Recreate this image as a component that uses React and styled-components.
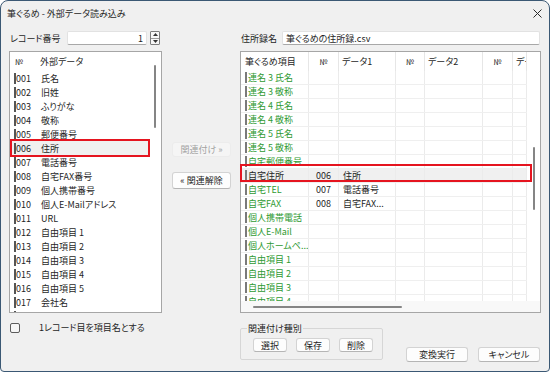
import React from "react";
import styled, { createGlobalStyle } from "styled-components";

const GlobalStyle = createGlobalStyle`
  * { box-sizing: border-box; }
  html, body { margin: 0; padding: 0; background: #ffffff; }
  body {
    font-family: "Noto Sans CJK JP", "Noto Sans", sans-serif;
    font-size: 9px;
    color: #1f1f1f;
    font-feature-settings: "palt";
  }
`;

const leftRows = [
  ["001", "氏名"], ["002", "旧姓"], ["003", "ふりがな"], ["004", "敬称"],
  ["005", "郵便番号"], ["006", "住所"], ["007", "電話番号"], ["008", "自宅FAX番号"],
  ["009", "個人携帯番号"], ["010", "個人E-Mailアドレス"], ["011", "URL"],
  ["012", "自由項目 1"], ["013", "自由項目 2"], ["014", "自由項目 3"],
  ["015", "自由項目 4"], ["016", "自由項目 5"], ["017", "会社名"], ["018", "会社名称2"],
];

const rightRows = [
  { name: "連名 3 氏名" }, { name: "連名 3 敬称" }, { name: "連名 4 氏名" },
  { name: "連名 4 敬称" }, { name: "連名 5 氏名" }, { name: "連名 5 敬称" },
  { name: "自宅郵便番号" },
  { name: "自宅住所", no: "006", data: "住所", selected: true },
  { name: "自宅TEL", no: "007", data: "電話番号" },
  { name: "自宅FAX", no: "008", data: "自宅FAX..." },
  { name: "個人携帯電話" }, { name: "個人E-Mail" }, { name: "個人ホームペ..." },
  { name: "自由項目 1" }, { name: "自由項目 2" }, { name: "自由項目 3" }, { name: "自由項目 4" },
];

const rightHead = ["筆ぐるめ項目", "№", "データ1", "№", "データ2", "№", "データ3"];

function App() {
  return (
    <>
      <GlobalStyle />
      <Window>
        <TitleBar>
          <span>筆ぐるめ - 外部データ読み込み</span>
          <svg width="9" height="9" viewBox="0 0 9 9">
            <path d="M0.5 0.5 L8.5 8.5 M8.5 0.5 L0.5 8.5" stroke="#2a2a2a" strokeWidth="1" />
          </svg>
        </TitleBar>
        <Content>
          <FieldRow>
            <FieldLabel $w={58}>レコード番号</FieldLabel>
            <TextBox $w={80} $align="right">1</TextBox>
            <Spinner>
              <SpinHalf>
                <svg width="5" height="3" viewBox="0 0 5 3"><path d="M0 3 L2.5 0 L5 3 Z" fill="#333" /></svg>
              </SpinHalf>
              <SpinHalf $bottom>
                <svg width="5" height="3" viewBox="0 0 5 3"><path d="M0 0 L2.5 3 L5 0 Z" fill="#333" /></svg>
              </SpinHalf>
            </Spinner>
          </FieldRow>
          <div />
          <FieldRow>
            <FieldLabel $w={42}>住所録名</FieldLabel>
            <TextBox $w={258}>筆ぐるめの住所録.csv</TextBox>
          </FieldRow>

          <ListBox $track={12}>
            <Rows>
              <LeftHead>
                <HeadNo>№</HeadNo>
                <span>外部データ</span>
              </LeftHead>
              {leftRows.map(([no, name]) => (
                <LeftRow key={no} $selected={no === "006"}>
                  <Bar $color="#555" />
                  <LeftNum>{no}</LeftNum>
                  <span>{name}</span>
                </LeftRow>
              ))}
            </Rows>
            <VTrack>
              <VThumb $top={13} $h={63} />
            </VTrack>
          </ListBox>

          <MiddleColumn>
            <PushButton disabled $h={15}>関連付け »</PushButton>
            <PushButton $h={17}>« 関連解除</PushButton>
          </MiddleColumn>

          <ListBox $track={13} $hbar>
            <Rows>
              <GridHead>
                {rightHead.map((h, i) => (
                  <HeadCell key={i} $center={h === "№"} $pad={i === 0 ? 4 : 3}>{h}</HeadCell>
                ))}
              </GridHead>
              {rightRows.map((r, i) => (
                <GridRow key={i} $selected={r.selected}>
                  <Cell $green={!r.selected}>
                    <Bar $color="#7a7a7a" $ml={4} />
                    <NameText>{r.name}</NameText>
                  </Cell>
                  <Cell $pad={7}>{r.no}</Cell>
                  <Cell $pad={4}>{r.data}</Cell>
                  <Cell />
                  <Cell />
                  <Cell />
                  <Cell />
                </GridRow>
              ))}
            </Rows>
            <VTrack>
              <VThumb $top={95} $h={63} />
            </VTrack>
            <HTrack>
              <HThumb />
            </HTrack>
            <Corner />
          </ListBox>

          <CheckRow>
            <CheckBox />
            <span>1レコード目を項目名とする</span>
          </CheckRow>
          <div />
          <BottomRight>
            <GroupBox>
              <legend>関連付け種別</legend>
              <SmallButton>選択</SmallButton>
              <SmallButton>保存</SmallButton>
              <SmallButton>削除</SmallButton>
            </GroupBox>
            <Actions>
              <PushButton $w={62} $h={15}>変換実行</PushButton>
              <PushButton $w={62} $h={15}>キャンセル</PushButton>
            </Actions>
          </BottomRight>
        </Content>
      </Window>
    </>
  );
}

const Window = styled.div`
  width: 550px;
  height: 372px;
  border: 1px solid #3b5874;
  border-radius: 8px 8px 4px 4px;
  background: #f0f0f0;
  display: flex;
  flex-direction: column;
  overflow: hidden;
`;
const TitleBar = styled.div`
  height: 24px;
  flex-shrink: 0;
  display: flex;
  align-items: center;
  justify-content: space-between;
  padding: 0 7px 0 6px;
  color: #1f1f1f;
`;
const Content = styled.div`
  flex: 1;
  display: grid;
  grid-template-columns: 153px 78px 301px;
  grid-template-rows: 14px 262px 1fr;
  row-gap: 6px;
  padding: 6px 8px 0 8px;
  & > :nth-child(n + 7) {
    margin-top: -6px;
  }
`;
const FieldRow = styled.div`
  display: flex;
  align-items: center;
`;
const FieldLabel = styled.span`
  width: ${(p) => p.$w}px;
  padding-left: 1px;
  flex-shrink: 0;
`;
const TextBox = styled.div`
  width: ${(p) => p.$w}px;
  height: 14px;
  background: #fff;
  border: 1px solid #e2e2e2;
  border-bottom-color: #a8a8a8;
  border-radius: 2px;
  display: flex;
  align-items: center;
  justify-content: ${(p) => (p.$align === "right" ? "flex-end" : "flex-start")};
  padding: 0 3px;
  white-space: nowrap;
`;
const Spinner = styled.div`
  width: 10px;
  height: 14px;
  margin-left: 3px;
  border: 1px solid #7d7d7d;
  border-radius: 1px;
  background: #f7f7f7;
  display: flex;
  flex-direction: column;
`;
const SpinHalf = styled.div`
  flex: 1;
  display: flex;
  align-items: center;
  justify-content: center;
  border-top: ${(p) => (p.$bottom ? "1px solid #9a9a9a" : "none")};
`;
const ListBox = styled.div`
  border: 1px solid #a6a6a6;
  background: #fff;
  display: grid;
  grid-template-columns: minmax(0, 1fr) ${(p) => p.$track}px;
  grid-template-rows: ${(p) => (p.$hbar ? "minmax(0, 1fr) 11px" : "minmax(0, 1fr)")};
  min-height: 0;
`;
const Rows = styled.div`
  min-height: 0;
  clip-path: inset(-7px -8px 0 -2px);
`;
const LeftHead = styled.div`
  height: 19px;
  display: flex;
  align-items: center;
`;
const HeadNo = styled.span`
  width: 30px;
  padding-left: 5px;
  font-size: 8px;
`;
const Selected = `
  background: #f0f0f0;
  position: relative;
  &::after {
    content: "";
    position: absolute;
    border: 2px solid #e5141f;
    pointer-events: none;
  }
`;
const LeftRow = styled.div`
  height: 14px;
  display: flex;
  align-items: center;
  white-space: nowrap;
  ${(p) => (p.$selected ? Selected : "")}
  &::after { inset: -2px -1px -2px 0; }
`;
const Bar = styled.span`
  width: 2px;
  height: 11px;
  flex-shrink: 0;
  background: ${(p) => p.$color};
  margin-left: ${(p) => p.$ml ?? 4}px;
`;
const LeftNum = styled.span`
  width: 25px;
  flex-shrink: 0;
`;
const cols = "68px 30px 57px 29px 58px 30px 14px";
const GridHead = styled.div`
  height: 19px;
  display: grid;
  grid-template-columns: ${cols};
`;
const HeadCell = styled.div`
  display: flex;
  align-items: center;
  justify-content: ${(p) => (p.$center ? "center" : "flex-start")};
  padding-left: ${(p) => (p.$center ? 0 : p.$pad)}px;
  font-size: ${(p) => (p.$center ? "8px" : "9px")};
  border-right: 1px solid #e6e6e6;
  overflow: hidden;
  white-space: nowrap;
`;
const GridRow = styled.div`
  height: 14px;
  display: grid;
  grid-template-columns: ${cols};
  border-bottom: 1px solid #efefef;
  ${(p) => (p.$selected ? Selected : "")}
  &::after { inset: -5px -5px 0 -1px; }
`;
const Cell = styled.div`
  display: flex;
  align-items: center;
  padding-left: ${(p) => p.$pad ?? 0}px;
  border-right: 1px solid #ebebeb;
  overflow: hidden;
  white-space: nowrap;
  color: ${(p) => (p.$green ? "#2f9a32" : "#1f1f1f")};
`;
const NameText = styled.span`
  margin-left: 1px;
`;
const VTrack = styled.div`
  display: flex;
  flex-direction: column;
  align-items: center;
  background: #fff;
`;
const VThumb = styled.div`
  width: 2px;
  margin-top: ${(p) => p.$top}px;
  height: ${(p) => p.$h}px;
  background: #858585;
  border-radius: 1px;
`;
const HTrack = styled.div`
  background: #f8f8f8;
  padding: 5px 0 0 12px;
`;
const HThumb = styled.div`
  width: 149px;
  height: 2px;
  background: #858585;
  border-radius: 1px;
`;
const Corner = styled.div`
  background: #f8f8f8;
`;
const MiddleColumn = styled.div`
  display: flex;
  flex-direction: column;
  align-items: flex-start;
  gap: 15px;
  padding: 91px 0 0 10px;
`;
const PushButton = styled.button`
  width: ${(p) => p.$w ?? 59}px;
  height: ${(p) => p.$h}px;
  padding: 0;
  font: inherit;
  font-size: 9px;
  color: #1f1f1f;
  background: #fdfdfd;
  border: 1px solid #d3d3d3;
  border-bottom-color: #b5b5b5;
  border-radius: 3px;
  display: flex;
  align-items: center;
  justify-content: center;
  &:disabled {
    color: #a3a3a3;
    background: #f5f5f5;
    border-color: #ececec;
  }
`;
const CheckRow = styled.div`
  display: flex;
  align-items: flex-start;
  padding: 10px 0 0 1px;
  line-height: 10px;
`;
const CheckBox = styled.span`
  width: 10px;
  height: 10px;
  border: 1px solid #5c5c5c;
  border-radius: 2px;
  background: #f6f6f6;
  margin-right: 19px;
`;
const BottomRight = styled.div`
  display: flex;
  align-items: flex-start;
`;
const GroupBox = styled.fieldset`
  width: 143px;
  margin: 9px 0 0 0;
  padding: 3px 0 7px 12px;
  border: 1px solid #d6d6d6;
  border-radius: 2px;
  display: flex;
  gap: 9px;
  & > legend {
    padding: 0 1px;
    margin-left: -6px;
    line-height: 13px;
  }
`;
const SmallButton = styled(PushButton)`
  width: 34px;
  height: 14px;
`;
const Actions = styled.div`
  display: flex;
  gap: 10px;
  margin: 34px 0 0 23px;
`;

export default App;
